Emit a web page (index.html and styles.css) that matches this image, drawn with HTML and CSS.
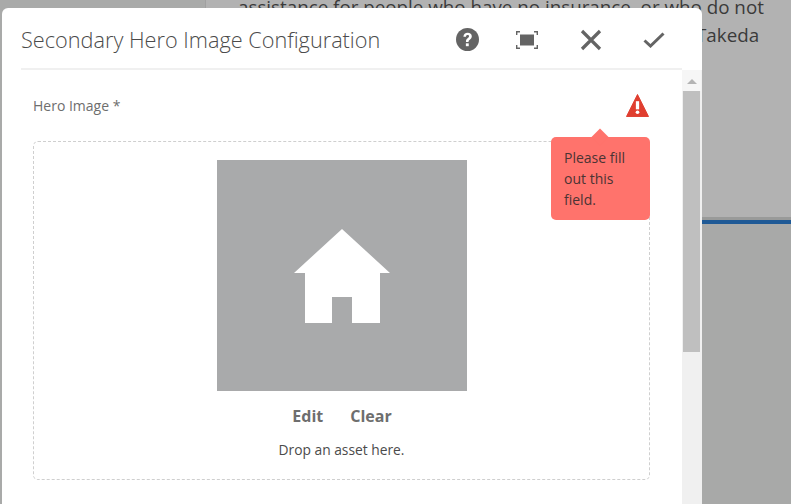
FILE: index.html
```html
<!DOCTYPE html>
<html lang="en">
<head>
<meta charset="utf-8">
<title>Secondary Hero Image Configuration</title>
<link rel="stylesheet" href="styles.css">
</head>
<body>
<div class="backdrop">
  <div class="side"></div>
  <div class="page">
    <div class="page-text">
      <p>assistance for people who have no insurance, or who do not</p>
      <p class="takeda">Takeda</p>
    </div>
    <div class="page-rule"></div>
    <div class="page-lower"></div>
  </div>
</div>
<section class="dialog">
  <header class="head">
    <h1 class="title">Secondary Hero Image Configuration</h1>
    <div class="actions">
      <svg class="ico-help" width="23" height="23" viewBox="0 0 24 24"><circle cx="12" cy="12" r="12" fill="#646464"/><path d="M7.7 9.2C7.9 6.6 9.6 5 12.2 5c2.5 0 4.3 1.5 4.3 3.700 0 1.700-.9 2.600-2.100 3.500-1 .7-1.300 1.200-1.300 2.300h-2.700c-.1-1.800.4-2.800 1.700-3.800 1-.8 1.500-1.200 1.500-2 0-.8-.6-1.300-1.500-1.300-1 0-1.600.6-1.700 1.800z" fill="#fff"/><rect x="10.300" y="16" width="3" height="3" fill="#fff"/></svg>
      <svg class="ico-full" width="22" height="18" viewBox="0 0 22 18"><rect x="4" y="3.500" width="14" height="11" fill="#646464"/><path d="M.7 4V.7H4M18 .7h3.300V4M21.300 14v3.300H18M4 17.300H.7V14" fill="none" stroke="#646464" stroke-width="1.400"/></svg>
      <svg class="ico-close" width="22" height="22" viewBox="0 0 22 22"><path d="M2 2l18 18M20 2L2 20" fill="none" stroke="#646464" stroke-width="3.200"/></svg>
      <svg class="ico-check" width="22" height="16" viewBox="0 0 22 16"><path d="M1.500 8.500l6 5.500L20.500 1.500" fill="none" stroke="#646464" stroke-width="3"/></svg>
    </div>
  </header>
  <div class="content">
    <div class="scroll-area">
      <div class="field-row">
        <label class="field-label">Hero Image *</label>
        <svg class="ico-alert" width="23" height="23" viewBox="0 0 24 24"><path d="M12 .5L23.500 23.500H.5z" fill="#e03e2f" stroke="#e03e2f" stroke-linejoin="round"/><rect x="10.300" y="7.500" width="3.400" height="8.500" fill="#fff"/><circle cx="12" cy="19" r="1.900" fill="#fff"/></svg>
      </div>
      <div class="dropzone">
        <div class="thumb">
          <svg width="96" height="94" viewBox="0 0 96 94"><path d="M48 0L96 44H86V94H58V68H38V94H11V44H0z" fill="#fff"/></svg>
        </div>
        <div class="links"><span>Edit</span><span>Clear</span></div>
        <p class="hint">Drop an asset here.</p>
      </div>
      <div class="tip">Please fill out this field.</div>
    </div>
    <div class="scrollbar">
      <div class="arrow"></div>
      <div class="thumb-bar"></div>
    </div>
  </div>
</section>
</body>
</html>
```

FILE: styles.css
```css
* { box-sizing: border-box; }
html, body { margin: 0; height: 100%; overflow: hidden; }
body { font-family: "Open Sans", "Liberation Sans", sans-serif; background: #a9aaa9; }

.backdrop { display: flex; height: 504px; }
.side { width: 206px; background: #a9aaa9; border-right: 1px solid #a0a0a0; flex: none; }
.page { flex: 1; display: flex; flex-direction: column; }
.page-text { height: 217px; background: #b2b2b2; padding-left: 32px; overflow: hidden; color: #3a3a3a; font-size: 18.8px; line-height: 28px; }
.page-text p { margin: 0; white-space: nowrap; position: relative; top: -7px; }
.page-text .takeda { padding-left: 458px; }
.page-rule { height: 8px; background: #1f5a96; border-top: 3px solid #999a99; border-bottom: 1px solid #a8a9a8; }
.page-lower { flex: 1; background: #a8a9a8; }

.dialog { position: absolute; left: 2px; top: 8px; width: 700px; height: 496px; background: #fff; border-radius: 6px 6px 0 0; display: flex; flex-direction: column; }
.head { height: 62px; margin: 0 20px 0 19px; padding-top: 3px; border-bottom: 2px solid #f0f0f0; display: flex; align-items: center; justify-content: space-between; flex: none; }
.title { margin: 0; font-size: 21.7px; font-weight: 300; color: #4b4b4b; white-space: nowrap; }
.actions { display: flex; align-items: center; margin-right: 17px; }
.ico-help { margin-right: 37px; }
.ico-full { margin-right: 42px; }
.ico-close { margin-right: 41px; }

.content { flex: 1; display: flex; min-height: 0; }
.scroll-area { flex: 1; position: relative; padding: 0 32px 0 31px; }
.field-row { height: 71px; display: flex; align-items: center; justify-content: space-between; }
.field-label { font-size: 14px; color: #6e6e6e; }
.ico-alert { margin-right: 0; margin-left: auto; position: relative; right: 1px; }
.dropzone { height: 339px; border: 1px dashed #cfcfcf; border-radius: 5px; display: flex; flex-direction: column; align-items: center; padding-top: 18px; }
.thumb { width: 250px; height: 231px; background: #a9aaab; display: flex; align-items: center; justify-content: center; flex: none; }
.links { display: flex; gap: 27px; margin: 13px 0 0 1px; font-size: 16px; font-weight: 700; color: #6e6e6e; line-height: 24px; }
.hint { margin: 12px 0 0; font-size: 13.8px; color: #4b4b4b; line-height: 20px; }
.tip { position: absolute; left: 549px; top: 67px; width: 99px; height: 83px; padding: 10px 12px 11px 13px; background: #ff736c; border-radius: 5px; font-size: 14px; line-height: 21px; color: #4b3434; }
.tip::before { content: ""; position: absolute; left: 43px; top: -6px; width: 12px; height: 12px; background: #ff736c; transform: rotate(45deg); }

.scrollbar { width: 20px; background: #f0f0f0; padding: 0 2px 0 1px; flex: none; display: flex; flex-direction: column; align-items: stretch; }
.arrow { height: 21px; margin: 0 -1px; position: relative; background: #f6f6f6; }
.arrow::after { content: ""; position: absolute; left: 5px; top: 9px; border: 5px solid transparent; border-top: 0; border-bottom-color: #b4b4b4; }
.thumb-bar { height: 261px; background: #bfbfbf; }
```
